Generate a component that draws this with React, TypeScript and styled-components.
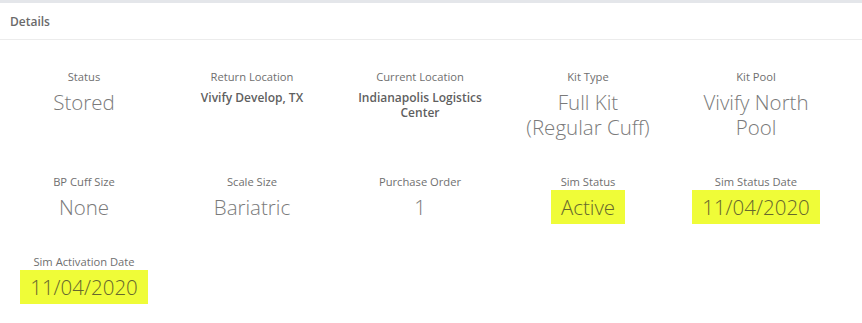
import React from "react";
import styled, { createGlobalStyle } from "styled-components";

const Global = createGlobalStyle`
  html, body { margin: 0; padding: 0; background: #ffffff; }
  body { font-family: "Open Sans", "Liberation Sans", sans-serif; }
`;

const Card = styled.section`
  width: 862px;
  background: #ffffff;
  border-top: 3px solid #e4e6ea;
`;

const Header = styled.header`
  height: 37px;
  box-sizing: border-box;
  padding: 0 10px;
  display: flex;
  align-items: center;
  border-bottom: 1px solid #ececec;
  font-size: 12px;
  font-weight: 600;
  color: #6a6a6a;
`;

const Grid = styled.div`
  display: grid;
  grid-template-columns: repeat(5, 168px);
  row-gap: 34px;
  padding-top: 29px;
  padding-bottom: 20px;
`;

const Cell = styled.div`
  display: flex;
  flex-direction: column;
  align-items: center;
  text-align: center;
`;

const Label = styled.div`
  font-size: 11.2px;
  line-height: 16px;
  color: #6f6f6f;
`;

const Value = styled.div<{ $bold?: boolean }>`
  margin-top: 5px;
  font-size: ${(p) => (p.$bold ? "12px" : "20.5px")};
  line-height: ${(p) => (p.$bold ? "15px" : "25px")};
  font-weight: ${(p) => (p.$bold ? 600 : 300)};
  color: ${(p) => (p.$bold ? "#5f5f5f" : "#7a7a7a")};
  max-width: 132px;
`;

const Mark = styled.span`
  background: #effc38;
  color: #66672e;
  padding: 3px 10px;
`;

type Item = { label: string; value: string; bold?: boolean; mark?: boolean };

const items: Item[] = [
  { label: "Status", value: "Stored" },
  { label: "Return Location", value: "Vivify Develop, TX", bold: true },
  { label: "Current Location", value: "Indianapolis Logistics Center", bold: true },
  { label: "Kit Type", value: "Full Kit (Regular Cuff)" },
  { label: "Kit Pool", value: "Vivify North Pool" },
  { label: "BP Cuff Size", value: "None" },
  { label: "Scale Size", value: "Bariatric" },
  { label: "Purchase Order", value: "1" },
  { label: "Sim Status", value: "Active", mark: true },
  { label: "Sim Status Date", value: "11/04/2020", mark: true },
  { label: "Sim Activation Date", value: "11/04/2020", mark: true },
];

export default function App() {
  return (
    <>
      <Global />
      <Card>
        <Header>Details</Header>
        <Grid>
          {items.map((it, i) => (
            <Cell key={i}>
              <Label>{it.label}</Label>
              <Value $bold={it.bold}>
                {it.mark ? <Mark>{it.value}</Mark> : it.value}
              </Value>
            </Cell>
          ))}
        </Grid>
      </Card>
    </>
  );
}
